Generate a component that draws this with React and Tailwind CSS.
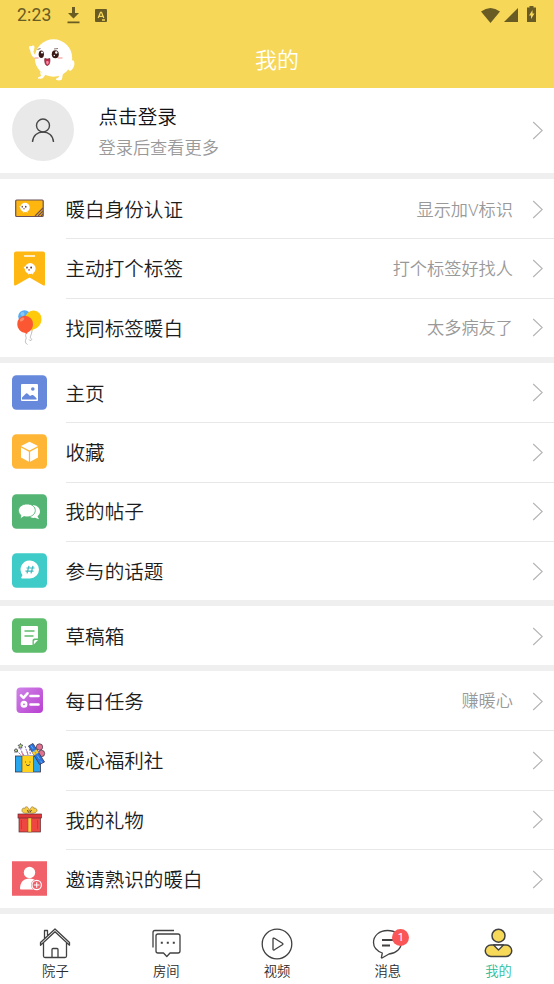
const Mascot = ({ className }) => (
  <svg className={className} viewBox="0 0 48 44" fill="none">
    <g fill="#fff">
      <circle cx="25.500" cy="20" r="18.700" />
      <path d="M12 34l1 4-3 1.500c-1 1.500 4 1.500 5 .5l3-4zM30 36l1 3-3 1.800c-1 1.500 5 2.500 6 .5l1-6zM43 23c2-2 4 .5 3.300 4s-2.500 5-4.500 6l-2-2c2.500-2.500 3.700-4.500 3.200-8z" />
    </g>
    <path d="M9 19C5 19 4 16 3.500 11M3.500 12L2.500 9.500M4.500 12l.5-3" stroke="#fff" strokeWidth="3" strokeLinecap="round" />
    <ellipse cx="13.300" cy="16.300" rx="2.600" ry="3.800" fill="#3b1914" />
    <ellipse cx="27.300" cy="16.300" rx="3.500" ry="4" fill="#3b1914" />
    <g fill="#fff">
      <circle cx="14" cy="14.500" r="1.100" />
      <circle cx="28.300" cy="14.500" r="1.200" />
      <circle cx="26.300" cy="17.500" r=".7" />
    </g>
    <path d="M9.500 11.500l3-1M26 11l4-.5" stroke="#3b1914" strokeWidth=".6" />
    <path d="M6.500 20h4M30 20h4.500" stroke="#f68b8b" strokeWidth="1.200" />
    <path d="M16.800 20.500q2.500 1 5 0c.5 4.500-1 7-2.500 7s-3-2.500-2.500-7z" fill="#c42f50" stroke="#6b1f2a" strokeWidth=".7" />
    <path d="M18 23.500q2-1 2.800.5-.5 2.500-1.400 2.500T18 23.500z" fill="#ff8fa8" />
  </svg>
)

const MiniMascot = ({ x, y }) => (
  <g transform={`translate(${x} ${y})`}>
    <circle r="4.700" fill="#fff" />
    <path d="M-4 .5l-1.300-2M-1.500 4v1M2 4l.3 1" stroke="#fff" strokeWidth="1" />
    <ellipse cx="-2.800" cy="-.8" rx=".6" ry="1" fill="#4a2418" />
    <ellipse cx=".8" cy="-.8" rx=".7" ry="1" fill="#4a2418" />
    <circle cx="-1" cy="1.200" r=".7" fill="#a04a45" />
  </g>
)

const Svg = ({ children }) => (
  <svg className="size-[35px] shrink-0" viewBox="0 0 35 35" fill="none">
    {children}
  </svg>
)

const CardIcon = () => (
  <Svg>
    <rect x="3.700" y="9" width="27.500" height="16.500" rx="1" fill="#ffb70f" stroke="#6b5058" strokeWidth="1.200" />
    <path d="M23 25l8-8M26 25l5-5M29 25l2-2" stroke="#6b5058" strokeWidth="1.100" />
    <MiniMascot x={13} y={16.500} />
  </Svg>
)

const BookmarkIcon = () => (
  <Svg>
    <path d="M4 .5h27a2 2 0 0 1 2 2v30.500q0 2.500-2 1.200L17.500 26.500 4 34.200q-2 1.200-2-1.200V2.500a2 2 0 0 1 2-2z" fill="#ffb812" />
    <path d="M12.500 5h10" stroke="#fff" strokeWidth="1.300" strokeLinecap="round" />
    <g transform="translate(18.200 17.500) scale(1.150)">
      <MiniMascot x={0} y={0} />
    </g>
  </Svg>
)

const BalloonsIcon = () => (
  <Svg>
    <path d="M15 22c-3 4 0 5-1 7s-1 4 1.500 5.500M20 20c0 5-3 7-1 8.500s-1 3-2 1" stroke="#9b9da2" strokeWidth=".7" />
    <circle cx="12.500" cy="6.500" r="6.300" fill="#58adf2" />
    <circle cx="10.500" cy="4" r="2" fill="#86c8f8" />
    <path d="M21.500.5a8 8 0 0 1 8 9c0 5-4 9-8.500 10l-1 1.500-1-2c-4-2-6-5-6-9.500a8.500 8.500 0 0 1 8.500-9z" fill="#ffca0b" />
    <path d="M13 5.800a8 8 0 0 1 8 8.500c0 4-2.500 7-5.500 8.200l-.5 1.500-1.700-1c-5-.8-8-4.500-8-9A7.800 7.800 0 0 1 13 5.800z" fill="#fb5733" />
    <ellipse cx="10" cy="9.500" rx="2.500" ry="1.600" fill="#ff8c67" transform="rotate(-35 10 9.500)" />
  </Svg>
)

const HomePageIcon = () => (
  <Svg>
    <rect y=".3" width="35" height="34.500" rx="4.500" fill="#6689dc" />
    <rect x="9" y="9" width="17" height="17" rx="1" fill="#fff" />
    <circle cx="20.800" cy="14" r="1.800" fill="#6689dc" />
    <path d="M10 24.500v-2l4-4q1-.5 2 .5l2 2 2-1q1-.3 2 .7l2.500 2.500v1.300z" fill="#6689dc" />
  </Svg>
)

const FavoriteIcon = () => (
  <Svg>
    <rect y=".3" width="35" height="34.500" rx="4.500" fill="#ffb637" />
    <g fill="#fff">
      <path d="M17.500 7.800l8.500 4.200-8.500 4.600L9 12z" />
      <path d="M9 13.500l7.900 4.200v10L9 23.500z" />
      <path d="M26 13.500l-7.900 4.200v10l7.900-4.200z" />
    </g>
  </Svg>
)

const PostsIcon = () => (
  <Svg>
    <rect y=".3" width="35" height="34.500" rx="4.500" fill="#53b474" />
    <path d="M20 11c5 0 8 3 8 6.500 0 2-1 3.700-2.500 4.800l1.500 3-4-1.500c-3 .4-6-.8-7.500-2.800z" fill="#fff" />
    <path d="M15 10c5 0 8.300 2.800 8.300 6.500S19.500 23 15 23c-1 0-2-.1-3-.4L8 25l1-3.500c-1.500-1.200-2.500-3-2.500-5C6.500 12.800 10.200 10 15 10z" fill="#fff" stroke="#53b474" strokeWidth=".9" />
  </Svg>
)

const TopicsIcon = () => (
  <Svg>
    <rect y=".3" width="35" height="34.500" rx="4.500" fill="#3fcbc7" />
    <path d="M18 7.500a9 9 0 1 1 0 18H10q-1.500-.3-.5-1.500l1-2A9 9 0 0 1 18 7.500z" fill="#fff" />
    <path d="M17 12.800l-2 7.500M21 12.800l-2 7.500M14.500 15h8M13.500 18.200h8" stroke="#3fb8bf" strokeWidth="1.200" />
  </Svg>
)

const DraftIcon = () => (
  <Svg>
    <rect y=".3" width="35" height="34.500" rx="4.500" fill="#5dbd6d" />
    <path d="M10 8h15q1 0 1 1v11.500h-3.500q-2 0-2 2v4.500H10q-1 0-1-1V9q0-1 1-1z" fill="#fff" />
    <path d="M21.800 26.500v-3q0-1.500 1.500-1.500H26z" fill="#fff" />
    <path d="M12.500 13h10M12.500 18h9" stroke="#5dbd6d" strokeWidth="1.300" />
  </Svg>
)

const TasksIcon = () => (
  <Svg>
    <defs>
      <linearGradient id="tasks" x1="0" y1="0" x2="1" y2="1">
        <stop stopColor="#cf84e8" />
        <stop offset="1" stopColor="#b93fd0" />
      </linearGradient>
    </defs>
    <rect x="4.500" y="4.500" width="26.500" height="25.500" rx="4" fill="url(#tasks)" />
    <g stroke="#fff" strokeWidth="2.600" strokeLinecap="round" strokeLinejoin="round">
      <path d="M9 12.300l2.500 2.500 4-4.500M18.500 13h8M18.500 21.500h8" />
      <circle cx="12" cy="21.300" r="2.200" />
    </g>
  </Svg>
)

const WelfareIcon = () => (
  <Svg>
    <rect x="3.500" y="14" width="25" height="16" fill="#27a6ee" stroke="#3b3548" strokeWidth=".8" />
    <rect x="10" y="14" width="11.500" height="16" fill="#ffd21d" />
    <path d="M10 14v16M21.500 14v16" stroke="#3b3548" strokeWidth=".6" />
    <path d="M13.500 19.500v1M18 19.500v1M14 22.500q2 2.500 4 0" stroke="#3b3548" strokeWidth=".8" />
    <path d="M8 6l4 8M13 4l3 9M5 9l4 4M17.500 7l1 6" stroke="#7d5fc0" strokeWidth=".9" strokeDasharray="2 1" />
    <path d="M15 9l1 4M9.500 10l2 4" stroke="#e65569" strokeWidth=".8" />
    <path d="M8.500 1.500l.7 1.500 1.800.3-1.300 1.200.2 1.700-1.400-.9-1.600.9.300-1.700L6 3.300l1.800-.3zM4 6.500l.6 1.200 1.400.3-1 1 .1 1.300L4 9.700l-1.200.6.200-1.300-1-1 1.400-.3z" fill="#b4dd82" stroke="#3b3548" strokeWidth=".7" />
    <g fill="#e0718f" stroke="#3b3548" strokeWidth=".7">
      <circle cx="27.500" cy="5" r="3.200" />
      <circle cx="29.500" cy="11.500" r="3.200" />
    </g>
    <path d="M16.500 4l4.500-2.500L32.500 20l-5 2.500z" fill="#2d72dc" stroke="#3b3548" strokeWidth=".8" />
    <path d="M20 10l4.700-2.500 2 3.300-4.700 2.600z" fill="#ffca26" />
    <path d="M19 3.500l11 17.500" stroke="#56b3f5" strokeDasharray="4 2" />
  </Svg>
)

const GiftIcon = () => (
  <Svg>
    <path d="M16.500 11c-4 1-7-.5-6.500-3s2-2 3-1.500c-.5-2 3.500-3.500 4.500 3 1-6.500 5-5 4.500-3 1-.5 2.500-.5 3 1.500s-3 4-7 3z" fill="#f7ce42" stroke="#8a6b38" strokeWidth=".6" />
    <path d="M15.500 8l1 2.500M19.500 8l-1.500 2.500" stroke="#5a4430" />
    <rect x="7" y="15" width="21.500" height="15" fill="#ee4742" stroke="#5c3034" strokeWidth=".7" />
    <rect x="6" y="12" width="23.500" height="4" fill="#e23738" stroke="#5c3034" strokeWidth=".7" />
    <rect x="16" y="16" width="3.500" height="14" fill="#f9cd3f" stroke="#93482f" strokeWidth=".5" />
    <path d="M9.500 18v9M25.500 18v9" stroke="#d4353a" />
  </Svg>
)

const InviteIcon = () => (
  <Svg>
    <path d="M0 .3h35v34.500H0z" fill="#f1616a" />
    <g fill="#fff">
      <circle cx="17.500" cy="11.500" r="5.700" />
      <path d="M8 27.500c0-6 3.500-10 9.500-10s9.500 4 9.500 10q0 1-1 1H9q-1 0-1-1z" />
    </g>
    <circle cx="24.700" cy="24" r="5.700" fill="#f1616a" />
    <circle cx="24.700" cy="24" r="4.700" fill="#f1616a" stroke="#fff" strokeWidth="1.200" />
    <path d="M24.700 21.200v5.600M21.900 24h5.600" stroke="#fff" strokeWidth="1.100" />
  </Svg>
)

const Chevron = () => (
  <svg className="h-[19px] w-[11px] shrink-0" viewBox="0 0 11 19" fill="none" stroke="#b5b5b5" strokeWidth="1.150">
    <path d="M1.200 1l9 8.500-9 8.500" />
  </svg>
)

const groups = [
  [
    { title: '暖白身份认证', hint: '显示加V标识', Icon: CardIcon },
    { title: '主动打个标签', hint: '打个标签好找人', Icon: BookmarkIcon },
    { title: '找同标签暖白', hint: '太多病友了', Icon: BalloonsIcon },
  ],
  [
    { title: '主页', Icon: HomePageIcon },
    { title: '收藏', Icon: FavoriteIcon },
    { title: '我的帖子', Icon: PostsIcon },
    { title: '参与的话题', Icon: TopicsIcon },
  ],
  [{ title: '草稿箱', Icon: DraftIcon }],
  [
    { title: '每日任务', hint: '赚暖心', Icon: TasksIcon },
    { title: '暖心福利社', Icon: WelfareIcon },
    { title: '我的礼物', Icon: GiftIcon },
    { title: '邀请熟识的暖白', Icon: InviteIcon },
  ],
]

const TabSvg = ({ children }) => (
  <svg className="h-8 w-9 overflow-visible" viewBox="0 0 36 32" fill="none" stroke="#414141" strokeWidth="1.300" strokeLinejoin="round">
    {children}
  </svg>
)

const tabs = [
  {
    label: '院子',
    icon: (
      <TabSvg>
        <path d="M3.500 15.500L18 2l14.500 13.500v2.700L18 4.800 3.500 18.200zM7.500 11.800V3.500h3v5.500M6.500 16v13q0 1.500 1.500 1.500h20q1.500 0 1.500-1.500V16M15 30.500v-8q0-1 1-1h4q1 0 1 1v8" />
      </TabSvg>
    ),
  },
  {
    label: '房间',
    icon: (
      <TabSvg>
        <path d="M5 20.500V5.500Q5 3.500 7 3.500h19M10 7h20q2 0 2 2v15q0 2-2 2h-8l-3.200 3.500L15.500 26H10q-2 0-2-2V9q0-2 2-2z" />
        <path d="M12.800 15.800h2M18.800 15.800h2M24.800 15.800h2" strokeWidth="2" />
      </TabSvg>
    ),
  },
  {
    label: '视频',
    icon: (
      <TabSvg>
        <circle cx="18" cy="17" r="14.800" />
        <path d="M14 12v10q0 1.500 1.400.8l8-5q1-.8 0-1.500l-8-5Q14 10.600 14 12z" />
      </TabSvg>
    ),
  },
  {
    label: '消息',
    badge: 1,
    icon: (
      <TabSvg>
        <path d="M17.500 3.500c8 0 14 5 14 11.500S26 26.500 19 27l-7 4q-1 0-.5-1l.8-4C7 24 3.500 20 3.500 15.500c0-7 6-12 14-12z" />
        <path d="M12 13h12M12 18.500h8" strokeWidth="1.800" />
      </TabSvg>
    ),
  },
  {
    label: '我的',
    active: true,
    icon: (
      <TabSvg>
        <g fill="#f6d958" strokeWidth="1.500">
          <circle cx="17.500" cy="8.700" r="6.500" />
          <path d="M10 18h15a5.700 5.700 0 0 1 0 11.500H10A5.700 5.700 0 0 1 10 18z" />
        </g>
        <path d="M12.500 18l5 5 5-5z" fill="#fff" />
      </TabSvg>
    ),
  },
]

const StatusBar = () => (
  <div className="flex h-[30px] items-center px-[17px] text-[#685b23]">
    <span className="w-[50px] pt-[2px] font-['Roboto'] text-[17.500px] leading-none font-normal tracking-[0.200px]">
      2:23
    </span>
    <svg className="h-[17px] w-[13px]" viewBox="0 0 13 17" fill="currentColor">
      <path d="M5 0h3v6h4l-5.500 5.500L1 6h4zM.500 14.500h12V16.300H.500z" />
    </svg>
    <svg className="ml-[14.500px] h-[13px] w-3" viewBox="0 0 12 13">
      <rect width="12" height="13" rx="1" fill="currentColor" />
      <path d="M3.200 9L5.500 3.300h1L8.800 9M4 7.300h4M7 11h3" fill="none" stroke="#f6d757" strokeWidth="1.300" />
    </svg>
    <svg className="ml-auto h-[15px] w-[19px]" viewBox="0 0 19 15" fill="currentColor">
      <path d="M0 3.500Q9.500-3.500 19 3.500L9.500 15z" />
    </svg>
    <svg className="ml-[3.500px] h-[14px] w-[14px]" viewBox="0 0 14 14" fill="currentColor">
      <path d="M14 0v14H0z" />
    </svg>
    <svg className="mr-[1px] mb-[2px] ml-[9.500px] h-4 w-[9px]" viewBox="0 0 9 16">
      <path d="M2.500 0h4v1.500H9V16H0V1.500h2.500z" fill="currentColor" />
      <path d="M5.500 4L2 9.500h2V13l3.500-5.500h-2z" fill="#f6d757" />
    </svg>
  </div>
)

const MenuRow = ({ title, hint, Icon, first }) => (
  <div className="flex h-[59.400px] items-center pl-3">
    <Icon />
    <div
      className={`ml-[18.500px] flex h-full flex-1 items-center border-t pr-[11px] ${
        first ? 'border-transparent' : 'border-[#e8e8e8]'
      }`}
    >
      <span className="pb-px text-[19.600px] text-[#1c1c1c]">{title}</span>
      {hint ? (
        <span className="mr-[19px] ml-auto pt-[2px] font-['Roboto','Noto_Sans_CJK_SC',sans-serif] text-[17.200px] text-[#999]">
          {hint}
        </span>
      ) : (
        <span className="ml-auto" />
      )}
      <Chevron />
    </div>
  </div>
)

const App = () => {
  return (
    <div className="flex h-[984px] w-[554px] flex-col overflow-hidden bg-[#efefef] font-['Noto_Sans_CJK_SC',sans-serif] leading-none font-[350]">
      <header className="h-[88.400px] shrink-0 bg-[#f6d757]">
        <StatusBar />
        <div className="grid h-[58px] grid-cols-3 items-center">
          <Mascot className="mt-[2px] ml-[28px] h-[44px] w-[48px]" />
          <h1 className="pb-[3px] text-center text-[22px] text-white">我的</h1>
        </div>
      </header>

      <main className="flex flex-col gap-[5.600px]">
        <section className="flex h-[85px] items-center bg-white pr-[11px] pl-3">
          <div className="mb-px flex size-[62px] items-center justify-center rounded-full bg-[#e9e9e9]">
            <svg className="size-6" viewBox="0 0 24 24" fill="none" stroke="#484848" strokeWidth="1.400">
              <circle cx="12" cy="7.500" r="6.500" />
              <path d="M1.500 24C2 17.500 6.500 14 12 14s10 3.500 10.500 10" />
            </svg>
          </div>
          <div className="mb-px ml-[24.500px] flex flex-1 flex-col gap-[12px]">
            <span className="text-[19.600px] text-[#111]">点击登录</span>
            <span className="text-[17.200px] text-[#999]">登录后查看更多</span>
          </div>
          <Chevron />
        </section>

        {groups.map((rows, index) => (
          <section key={index} className="bg-white">
            {rows.map((row, i) => (
              <MenuRow key={row.title} {...row} first={i === 0} />
            ))}
          </section>
        ))}
      </main>

      <nav className="mt-[5.600px] grid flex-1 grid-cols-5 bg-white">
        {tabs.map(({ label, icon, badge, active }) => (
          <div key={label} className="flex flex-col items-center pt-[13px]">
            <div className="relative">
              {icon}
              {badge ? (
                <span className="absolute top-[1.500px] -right-[3.500px] flex size-[17px] items-center justify-center rounded-full bg-[#fb5657] font-['Roboto'] text-[11px] font-normal text-white">
                  {badge}
                </span>
              ) : null}
            </div>
            <span className={`mt-[5px] text-[13.300px] ${active ? 'text-[#2dbd9b]' : 'text-[#2b2b2b]'}`}>
              {label}
            </span>
          </div>
        ))}
      </nav>
    </div>
  )
}

export default App
